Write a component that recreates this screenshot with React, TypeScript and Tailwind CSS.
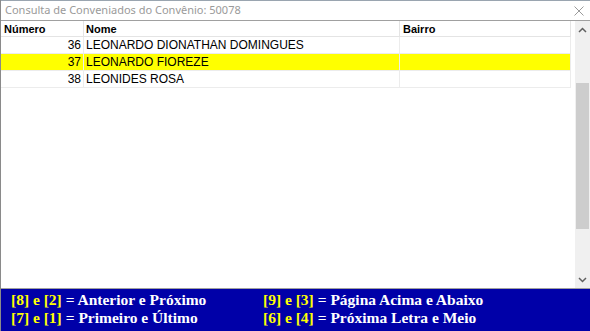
import { FC } from 'react'

// rows of the consultation grid
const rows = [
  { num: 36, nome: 'LEONARDO DIONATHAN DOMINGUES', bairro: '', sel: false },
  { num: 37, nome: 'LEONARDO FIOREZE', bairro: '', sel: true },
  { num: 38, nome: 'LEONIDES ROSA', bairro: '', sel: false },
]

// keyboard help shown in the blue footer
const help = [
  [
    { keys: '[8] e [2]', text: 'Anterior e Próximo' },
    { keys: '[7] e [1]', text: 'Primeiro e Último' },
  ],
  [
    { keys: '[9] e [3]', text: 'Página Acima e Abaixo' },
    { keys: '[6] e [4]', text: 'Próxima Letra e Meio' },
  ],
]

const Row: FC<{ num: number; nome: string; bairro: string; sel: boolean }> = ({
  num,
  nome,
  bairro,
  sel,
}) => (
  <div
    className={`flex h-[17px] w-[570px] border-b border-[#ececec] ${sel ? 'bg-[#ffff00]' : 'bg-white'}`}
  >
    <div className="w-[83px] shrink-0 border-r border-[#ececec] pr-[2px] text-right leading-[17px]">
      {num}
    </div>
    <div className="w-[316px] shrink-0 border-r border-[#ececec] pl-[2px] leading-[17px]">
      {nome}
    </div>
    <div className="w-[171px] shrink-0 border-r border-[#ececec] pl-[3px] leading-[17px]">
      {bairro}
    </div>
  </div>
)

const Scrollbar: FC = () => (
  <div className="flex w-[15px] shrink-0 flex-col bg-[#f0f0f0]">
    <div className="flex h-[17px] items-center justify-center">
      <svg width="9" height="6" viewBox="0 0 9 6">
        <path d="M1 5 L4.5 1.5 L8 5" stroke="#606060" strokeWidth="1.5" fill="none" />
      </svg>
    </div>
    <div className="h-[45px]" />
    <div className="mx-[1px] h-[146px] bg-[#cdcdcd]" />
    <div className="flex-1" />
    <div className="flex h-[17px] items-center justify-center">
      <svg width="9" height="6" viewBox="0 0 9 6">
        <path d="M1 1 L4.5 4.5 L8 1" stroke="#606060" strokeWidth="1.5" fill="none" />
      </svg>
    </div>
  </div>
)

export default function App() {
  return (
    <div
      className="flex h-[331px] w-[590px] flex-col overflow-hidden border-l border-[#8a8a8a] bg-white"
      style={{ fontFamily: 'Arial, "Liberation Sans", sans-serif' }}
    >
      {/* title bar */}
      <div className="flex h-[20px] shrink-0 items-center justify-between border-t border-[#9aa5b0] bg-white pl-[4px] pr-[6px]">
        <span className="text-[11px] text-[#9a9a9a]" style={{ fontFamily: '"Noto Sans", "Liberation Sans", sans-serif' }}>
          Consulta de Conveniados do Convênio: 50078
        </span>
        <svg width="10" height="10" viewBox="0 0 10 10">
          <path d="M0.5 0.5 L9.5 9.5 M9.5 0.5 L0.5 9.5" stroke="#9a9a9a" strokeWidth="1" />
        </svg>
      </div>

      {/* grid */}
      <div className="flex h-[269px] shrink-0 border-t border-b border-[#a0a0a0]">
        <div className="flex-1 text-[12px] text-black">
          <div className="flex h-[16px] w-[570px] border-b border-[#e4e4e4] text-[11px] font-bold">
            <div className="w-[83px] shrink-0 border-r border-[#e4e4e4] pl-[3px] leading-[16px]">Número</div>
            <div className="w-[316px] shrink-0 border-r border-[#e4e4e4] pl-[2px] leading-[16px]">Nome</div>
            <div className="w-[171px] shrink-0 border-r border-[#e4e4e4] pl-[3px] leading-[16px]">Bairro</div>
          </div>
          {rows.map((r) => (
            <Row key={r.num} {...r} />
          ))}
        </div>
        <Scrollbar />
      </div>

      {/* key help */}
      <div
        className="flex flex-1 bg-[#0000a8] pl-[10px] pt-[2px] text-[15.5px] font-bold leading-[18px] text-white"
        style={{ fontFamily: '"Liberation Serif", "Times New Roman", serif' }}
      >
        {help.map((col, i) => (
          <div key={i} className={i === 0 ? 'w-[252px]' : ''}>
            {col.map((h) => (
              <div key={h.keys}>
                <span className="text-[#ffff00]">{h.keys}</span> = {h.text}
              </div>
            ))}
          </div>
        ))}
      </div>
    </div>
  )
}
